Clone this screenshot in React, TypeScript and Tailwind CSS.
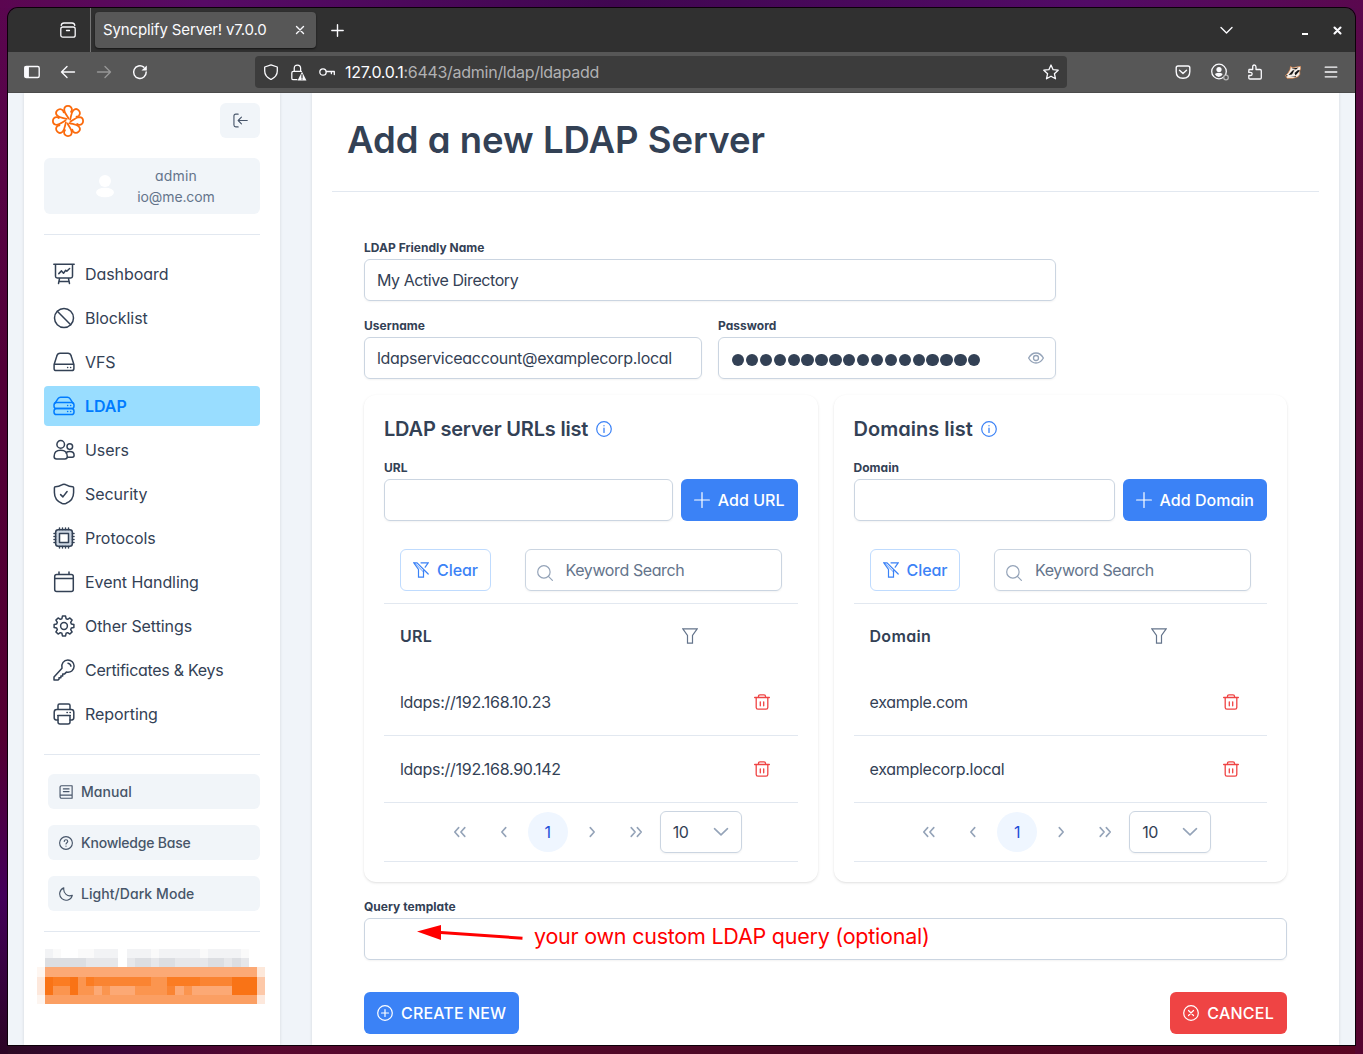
import type { ReactNode } from "react";

const PETALS = [0, 45, 90, 135, 180, 225, 270, 315];

// eight-tooth cog outline centred on 11,11
const GEAR_PATH =
  PETALS.map((deg, i) => {
    const point = (offset: number, radius: number) => {
      const a = ((deg + offset) * Math.PI) / 180;
      return `${(11 + radius * Math.cos(a)).toFixed(2)} ${(11 + radius * Math.sin(a)).toFixed(2)}`;
    };
    return `${i === 0 ? "M" : "L"}${point(-16, 7.6)} L${point(-9, 10)} L${point(9, 10)} L${point(16, 7.6)}`;
  }).join(" ") + "Z";

interface IconProps {
  className?: string;
  children: ReactNode;
  box?: number;
  width?: number;
}

function Icon({ className = "size-4", children, box = 16, width = 1.2 }: IconProps) {
  return (
    <svg
      className={`${className} shrink-0`}
      viewBox={`0 0 ${box} ${box}`}
      fill="none"
      stroke="currentColor"
      strokeWidth={width}
      strokeLinecap="round"
      strokeLinejoin="round"
    >
      {children}
    </svg>
  );
}

const menu = [
  {
    label: "Dashboard",
    icon: (
      <>
        <path d="M.8 1.3h20.4M2.5 1.6v11.6q0 1.7 1.7 1.7h13.6q1.7 0 1.7-1.7V1.6M6.6 15.2 5.5 20.5M15.4 15.2l1.1 5.3M5.8 18.4h10.4" />
        <path d="m5.8 10.6 2.7-2.7 2 2.3 2.2-2.9 1.1.9 2.8-2.7" />
      </>
    ),
  },
  {
    label: "Blocklist",
    icon: (
      <>
        <circle cx="11" cy="11" r="9.5" />
        <path d="m4.3 4.3 13.4 13.4" />
      </>
    ),
  },
  {
    label: "VFS",
    icon: (
      <>
        <path d="M1.1 13.4 4 4.6Q4.7 2.3 7 2.3h8q2.3 0 3 2.3l2.9 8.8v4q0 2.2-2.2 2.2H3.3q-2.2 0-2.2-2.2zM1.3 13.2h19.4" />
        <path d="M14.6 16.4h.1M17.6 16.4h.1" />
      </>
    ),
  },
  {
    label: "LDAP",
    active: true,
    icon: (
      <>
        <path d="M2 8.2 5.2 3.4Q6 2.2 7.5 2.2h7q1.5 0 2.3 1.2L20 8.2" />
        <rect x="1" y="7.6" width="20" height="6" rx="2.6" />
        <rect x="1" y="13.6" width="20" height="6" rx="2.6" />
        <path d="M14.6 10.6h.1M17.6 10.6h.1M14.6 16.6h.1M17.6 16.6h.1" />
      </>
    ),
  },
  {
    label: "Users",
    icon: (
      <>
        <circle cx="7.7" cy="5.4" r="3.8" />
        <circle cx="16.8" cy="7.6" r="2.8" />
        <path d="M1.1 17.5c0-4 2.7-6.2 6.6-6.2s6.6 2.2 6.6 6.2c0 1.7-.9 2.5-2.5 2.5H3.6c-1.6 0-2.5-.8-2.5-2.5M13 13.9c1-.9 2.3-1.3 3.8-1.3 2.7 0 4.3 1.5 4.3 3.7 0 1.2-.6 1.9-1.8 1.9h-4.9" />
      </>
    ),
  },
  {
    label: "Security",
    icon: (
      <>
        <path d="M11 1.2q1.3 0 2.2.7 3 1.9 6.4 1.9 1 0 1 1v4.7q0 8-7.8 11-1.8.6-3.6 0-7.8-3-7.8-11V4.8q0-1 1-1 3.4 0 6.4-1.9.9-.7 2.2-.7z" />
        <path d="m7.6 11.6 2.3 2.3 4.2-5.4" />
      </>
    ),
  },
  {
    label: "Protocols",
    icon: (
      <>
        <rect x="2.7" y="2.7" width="16.6" height="16.6" rx="2.5" fill="#cbd5e1" />
        <rect x="6.5" y="6.5" width="9" height="9" fill="#fff" />
        <path d="M6.5 1v1.5M9.5 1v1.5M12.5 1v1.5M15.5 1v1.5M6.5 19.5V21M9.5 19.5V21M12.5 19.5V21M15.5 19.5V21M1 6.5h1.5M1 9.5h1.5M1 12.5h1.5M1 15.5h1.5M19.5 6.5H21M19.5 9.5H21M19.5 12.5H21M19.5 15.5H21" />
      </>
    ),
  },
  {
    label: "Event Handling",
    icon: (
      <>
        <rect x="1.7" y="3.5" width="18.6" height="17" rx="2" />
        <path d="M1.7 7.5h18.6M6 1v2.3M16 1v2.3" />
      </>
    ),
  },
  {
    label: "Other Settings",
    icon: (
      <>
        <path d={GEAR_PATH} />
        <circle cx="11" cy="11" r="3.4" />
      </>
    ),
  },
  {
    label: "Certificates & Keys",
    tight: true,
    icon: (
      <>
        <path d="M9 9.2C7.8 4.7 11 .9 14.8.9c3.6 0 6.3 2.7 6.3 6.2 0 4.2-3.5 6.9-7.7 6l-2 2H9.7v1.9H7.9v1.8H6v1.4l-.9.8H1V18z" />
        <path d="M15 4.2q2.5.4 2.9 3" />
      </>
    ),
  },
  {
    label: "Reporting",
    icon: (
      <>
        <path d="M5 6.6V2.5Q5 1 6.5 1h9Q17 1 17 2.5v4.1M5 17H3.2q-2-.2-2-2.2V9.2q0-2.600 2.600-2.600h14.400q2.600 0 2.600 2.600v5.600q0 2-2 2.200H17" />
        <path d="M4.7 12.5h12.6M5 12.5V19q0 2 2 2h8q2 0 2-2v-6.5M14 9.6h.3M17 9.6h.3" />
      </>
    ),
  },
];

const sideButtons = [
  {
    label: "Manual",
    icon: <path d="M3 .8h12v14.4H3.2q-2 0-2-2V2.6Q1.200.8 3 .8zM1.400 11.500H15M5 4.500h6.500M5 7.500h6.500" />,
  },
  {
    label: "Knowledge Base",
    tight: true,
    icon: (
      <>
        <circle cx="8" cy="8" r="7.3" />
        <path d="M6 6.2C6 3.6 10 3.7 10 6.2 10 7.6 8 7.7 8 9.2M8 11.600v.1" />
      </>
    ),
  },
  {
    label: "Light/Dark Mode",
    icon: <path d="M5.500 1A7.300 7.300 0 1 0 15.200 9.500C10 11.500 4.500 7.500 5.500 1z" />,
  },
];

// censored licence banner, one string of shades per row
const mosaic = [
  [" ba  aabbb bbbabbbbbabbbba  ", "#fafafa", "#f2f3f5", "#eff0f2"],
  [" cccccbbbb bccbccbbbbccbcb  ", "#f0f1f3", "#e6e7ea", "#dcdee2"],
];
const orangeRows = [
  ["#fef6f1", ..."11111111111111111111111111", "#fde8da"],
  ["#fde8dc", ..."54452433333332244443333555", "#fdc8a8"],
  ["#fde8dc", ..."52252212111222231211111555", "#fdc8a8"],
  ["#fdf5f0", ..."00000000000000000000000000", "#fde8dc"],
];
const oranges = ["#fb9f63", "#fca975", "#fb954f", "#fa8432", "#fb7c22", "#f97316"];

function Mosaic() {
  return (
    <div className="-ml-[7px] mt-[17px] w-[228px]">
      {mosaic.map(([cells, a, b, c]) => (
        <div key={cells} className="flex h-[9px]">
          {Array.from({ length: 28 }, (_, i) => {
            const shade = cells[i] ?? " ";
            const color = shade === "a" ? a : shade === "b" ? b : shade === " " ? "#ffffff" : c;
            return <span key={i} className="h-full flex-1" style={{ backgroundColor: color }} />;
          })}
        </div>
      ))}
      {orangeRows.map((row, r) => (
        <div key={r} className={r === 0 ? "flex h-[10px]" : "flex h-[9px]"}>
          {row.map((cell, i) => (
            <span
              key={i}
              className="h-full flex-1"
              style={{ backgroundColor: cell.startsWith("#") ? cell : oranges[Number(cell)] }}
            />
          ))}
        </div>
      ))}
    </div>
  );
}

function TabStrip() {
  return (
    <div className="flex h-11 shrink-0 items-center bg-[#303030] text-[#fbfbfe]">
      <div className="flex h-full w-[83px] items-center justify-end border-r border-[#757575] pr-[14px]">
        <Icon width={1.3}>
          <rect x=".8" y="5" width="14.4" height="10.2" rx="2" />
          <path d="M1.2 3.4Q1.5 1 4 1h8q2.5 0 2.8 2.4M6.5 8.5h3" />
        </Icon>
      </div>
      <div className="ml-1 flex h-9 w-[221px] items-center justify-between rounded bg-[#575757] pl-2 pr-[11px] shadow-[0_1px_2px_rgba(0,0,0,0.6)]">
        <span className="whitespace-nowrap text-[15px] tracking-[-0.009em]">Syncplify Server! v7.0.0</span>
        <Icon className="size-[10px]" box={10} width={1.4}>
          <path d="m1.500 1.500 7 7M8.500 1.500l-7 7" />
        </Icon>
      </div>
      <Icon className="ml-[15px] size-[13px]" box={13} width={1.4}>
        <path d="M6.5.8v11.4M.8 6.5h11.4" />
      </Icon>
      <Icon className="ml-auto mr-[69px] size-[13px]" box={13} width={1.4}>
        <path d="m1 3.5 5.500 5.500L12 3.500" />
      </Icon>
      <span className="mr-[25px] mt-[8px] h-[2px] w-[6px] bg-white" />
      <Icon className="mr-[13px] size-[9px]" box={9} width={2.1}>
        <path d="m1.500 1.500 6 6M7.500 1.500l-6 6" />
      </Icon>
    </div>
  );
}

function Toolbar() {
  return (
    <div className="flex h-[41px] shrink-0 items-center border-b border-[#4b4b4b] bg-[#575757] text-[#fbfbfe]">
      <Icon className="ml-4 size-4" width={1.4}>
        <rect x=".8" y="2.500" width="14.400" height="11" rx="1.500" />
        <path d="M1.200 3v10h3V3z" fill="currentColor" />
      </Icon>
      <Icon className="ml-5 size-4" width={1.4}>
        <path d="M14.500 8H1.500M7 2.500 1.500 8 7 13.500" />
      </Icon>
      <Icon className="ml-5 size-4 text-[#979797]" width={1.4}>
        <path d="M1.500 8h13M9 2.500 14.500 8 9 13.500" />
      </Icon>
      <Icon className="ml-5 size-4" width={1.5}>
        <path d="M14.200 8A6.300 6.300 0 1 1 11.800 3.200" />
        <path d="M14.800 1.400v5H9.500z" fill="currentColor" stroke="none" />
      </Icon>
      <div className="ml-[107px] flex h-8 w-[812px] items-center rounded bg-[#3c3c3c] px-2">
        <Icon width={1.3}>
          <path d="M8 .9 14.300 3v4q0 5.500-6.300 8.500Q1.700 12.500 1.700 7V3z" />
        </Icon>
        <Icon className="ml-[11px] size-[17px]" width={1.2}>
          <path d="M6.500 14.800H3.200q-1.500 0-1.500-1.500V8.500Q1.700 7 3.200 7h7.500M4 7V4Q4 1 7 1t3 3v3" />
          <path d="m11.300 7.200 4.200 8.300H7.100z" fill="currentColor" stroke="none" />
          <path d="M11.300 10v2.600M11.300 14v.2" stroke="#3c3c3c" />
        </Icon>
        <Icon className="ml-3 size-4" width={1.3}>
          <circle cx="4" cy="8" r="3.200" />
          <path d="M7.300 7.500h8v3M12.400 7.700v2" />
        </Icon>
        <span className="ml-[10px] whitespace-nowrap text-base tracking-[-0.017em] text-[#b1b1b3]">
          <span className="text-[#fbfbfe]">127.0.0.1</span>:6443/admin/ldap/ldapadd
        </span>
        <Icon className="ml-auto size-4" width={1.3}>
          <path d="m8 1 2.100 4.700 5.100.5-3.800 3.500 1.100 5.100L8 12.200l-4.500 2.600 1.100-5.100L.8 6.200l5.100-.5z" />
        </Icon>
      </div>
      <Icon className="ml-auto size-4" width={1.4}>
        <path d="M3 2h10q1.800 0 1.800 1.800v3.700q0 6.800-6.800 6.800T1.200 7.500V3.800Q1.200 2 3 2zM4.500 6.200 8 9.500l3.500-3.300" />
      </Icon>
      <Icon className="ml-5 size-[18px]" box={18} width={1.3}>
        <circle cx="8" cy="8.500" r="7.300" />
        <circle cx="8" cy="6.500" r="2.600" fill="currentColor" stroke="none" />
        <path d="M3.800 11q4.200-2.400 8 0-1.600 3-4 3t-4-3z" fill="currentColor" stroke="none" />
        <circle cx="15" cy="14.500" r="2.300" fill="#575757" stroke="#b5b5b5" />
      </Icon>
      <Icon className="ml-[18px] size-4" width={1.3}>
        <path d="M2 5.500h3.700V3Q5.700 1 7.300 1T9 3v2.500h4q1.300 0 1.300 1.300v7q0 1.200-1.300 1.200H3q-1.200 0-1.200-1.200v-2.300h1.500q1.800 0 1.800-1.600T3.300 8.300H1.700z" />
      </Icon>
      <svg className="ml-[22px] size-4" viewBox="0 0 16 16">
        <path d="M.5 11.500 3 9l2-3.500.5-3 2.300 1.300 4.700-1 3-.5.2 2-1 3 .2 3-2 2.500-5 1.500H2z" fill="#f4eee8" stroke="#e67e35" strokeWidth=".6" />
        <path d="m3.500 11 4-4.500L9.500 6 7 10.500zM9.500 9 13 6l2 .5-4.500 5zM6.500 4.800l7-1.300-2.500 2zM.8 11l2 .5-1 1.200zM5 13l6-1v.8z" fill="#171717" />
      </svg>
      <Icon className="ml-[22px] mr-4 size-4" width={1.3}>
        <path d="M2.200 3.200h11.600M2.200 8h11.600M2.200 12.800h11.600" />
      </Icon>
    </div>
  );
}

function Sidebar() {
  return (
    <aside className="w-64 shrink-0 bg-white px-5 pt-[10px] shadow-[0_0_3px_rgba(0,0,0,0.12)]">
      <div className="flex h-[35px] items-center justify-between pl-2">
        <svg className="-ml-px size-[34px]" viewBox="0 0 34 34" fill="none" stroke="#fb6a0c" strokeWidth="1.8" strokeLinecap="round">
          {PETALS.map((deg) => (
            <path
              key={deg}
              d="M17.500 14.500C16 11.500 13.200 8.800 13.200 5.700 13.300 3.300 15 1.900 17 1.900c2.400 0 4 1.700 3.900 3.900-.1.900-.4 1.500-.9 2.100"
              transform={`rotate(${deg} 17 17)`}
            />
          ))}
        </svg>
        <button className="flex h-[35px] w-10 items-center justify-center rounded-md bg-[#f1f5f9] text-[#475569]">
          <Icon className="size-[15px]">
            <path d="M5.500 1.200H3Q1 1.200 1 3.200v9.600q0 2 2 2h2.500M15.200 8H5.500M9 4.500 5.500 8 9 11.500" />
          </Icon>
        </button>
      </div>

      <div className="mt-5 flex h-14 items-center rounded-md bg-[#f1f5f9] pl-[52px]">
        <svg className="h-[23px] w-[18px]" viewBox="0 0 18 23" fill="#fff">
          <circle cx="9" cy="6" r="6" />
          <ellipse cx="9" cy="17.500" rx="9" ry="4.800" />
        </svg>
        <div className="ml-[22px] w-[80px] text-center text-[14px] leading-[21px] text-[#64748b]">
          <p className="tracking-[0.012em]">admin</p>
          <p className="tracking-[-0.008em]">io@me.com</p>
        </div>
      </div>

      <nav className="mt-5 flex flex-col gap-1 border-y border-[#e2e8f0] pb-5 pt-[19px]">
        {menu.map((item) => (
          <a
            key={item.label}
            className={
              item.active
                ? "flex h-10 items-center gap-[10px] rounded bg-[#99ddff] pl-[9px] font-semibold text-[#007bff]"
                : "flex h-10 items-center gap-[10px] rounded pl-[9px]"
            }
          >
            <Icon className="size-[22px]" box={22} width={1.5}>
              {item.icon}
            </Icon>
            <span className={item.tight ? "tracking-[-0.018em]" : "tracking-[-0.004em]"}>{item.label}</span>
          </a>
        ))}
      </nav>

      <div className="mt-[19px] flex flex-col gap-4 border-b border-[#e2e8f0] pb-5 pl-1">
        {sideButtons.map((item) => (
          <button
            key={item.label}
            className="flex h-[35px] items-center gap-2 rounded-md bg-[#f1f5f9] pl-[11px] text-sm font-medium text-[#475569]"
          >
            <Icon className="size-[14px]" width={1.3}>{item.icon}</Icon>
            <span className={item.tight ? "tracking-[-0.015em]" : "tracking-[0.004em]"}>{item.label}</span>
          </button>
        ))}
      </div>
      <Mosaic />
    </aside>
  );
}

interface FieldProps {
  label: string;
  className?: string;
  children?: ReactNode;
}

function Field({ label, className = "", children }: FieldProps) {
  return (
    <div className={className}>
      <div className="h-5 text-xs font-bold leading-[17px] tracking-[0.002em]">{label}</div>
      <div className="flex h-[42px] items-center rounded-md border border-[#cbd5e1] px-3 shadow-[0_1px_2px_rgba(18,18,23,0.05)]">
        {children}
      </div>
    </div>
  );
}

function FilterIcon() {
  return (
    <Icon className="size-4 text-[#64748b]">
      <path d="M.8.8h14.400L10.500 7.500v7.700h-5V7.500z" strokeLinejoin="miter" />
    </Icon>
  );
}

function Paginator() {
  return (
    <div className="flex h-[59px] items-center justify-center gap-1 border-b border-[#e2e8f0] text-[#94a3b8]">
      <div className="flex size-10 items-center justify-center">
        <Icon width={1.8} className="size-[14px]"><path d="M6.500 3 2 8l4.500 5M13.500 3 9 8l4.500 5" /></Icon>
      </div>
      <div className="flex size-10 items-center justify-center">
        <Icon width={1.8} className="size-[14px]"><path d="M10 3 5.500 8l4.500 5" /></Icon>
      </div>
      <div className="flex size-10 items-center justify-center rounded-full bg-[#eff6ff] text-[#1d4ed8]">1</div>
      <div className="flex size-10 items-center justify-center">
        <Icon width={1.8} className="size-[14px]"><path d="m6 3 4.500 5L6 13" /></Icon>
      </div>
      <div className="flex size-10 items-center justify-center">
        <Icon width={1.8} className="size-[14px]"><path d="M2.500 3 7 8l-4.500 5M9.500 3 14 8l-4.500 5" /></Icon>
      </div>
      <div className="flex h-[42px] w-[82px] items-center justify-between rounded-md border border-[#cbd5e1] px-3 text-[#334155] shadow-[0_1px_2px_rgba(18,18,23,0.05)]">
        <span className="tracking-[-0.03em]">10</span>
        <Icon className="size-4 text-[#94a3b8]" width={1.6}><path d="m1.500 4.700 6.500 6.200 6.500-6.200" /></Icon>
      </div>
    </div>
  );
}

interface ListCardProps {
  title: string;
  titleClass: string;
  column: string;
  rows: string[];
}

function ListCard({ title, titleClass, column, rows }: ListCardProps) {
  return (
    <section className="h-[487px] flex-1 rounded-xl bg-white p-5 shadow-[0_1px_3px_rgba(0,0,0,0.1),0_1px_2px_-1px_rgba(0,0,0,0.1)]">
      <h2 className="flex h-7 items-center gap-2 text-xl font-semibold">
        <span className={titleClass}>{title}</span>
        <Icon className="size-4 text-[#3b82f6]">
          <circle cx="8" cy="8" r="7.300" />
          <path d="M8 7.200v4.200M8 4.600v.2" strokeWidth="1.300" />
        </Icon>
      </h2>
      <div className="mt-4 flex items-end gap-2">
        <Field label={column} className="flex-1" />
        <button className="flex h-[42px] items-center gap-2 whitespace-nowrap rounded-md bg-[#3b82f6] px-[13px] font-medium tracking-[0.001em] text-white">
          <Icon><path d="M8 .6v14.800M.6 8h14.800" /></Icon>
          Add {column}
        </button>
      </div>

      <div className="mt-7 flex h-[55px] justify-between border-b border-[#e2e8f0] px-4">
        <button className="flex h-[42px] items-center gap-2 rounded-md border border-[#bfdbfe] px-3 font-medium tracking-[-0.004em] text-[#3b82f6]">
          <Icon>
            <path d="M10.500 8.500v6.700h-5V7.500L.8.8H4L15.200 12M8 .8h7.200l-3 4.400" strokeLinejoin="miter" />
            <path d="M1.500.8 10.500 10" strokeWidth=".8" />
          </Icon>
          Clear
        </button>
        <div className="flex h-[42px] w-[257px] items-center rounded-md border border-[#cbd5e1] pl-[11px] tracking-[-0.025em] text-[#64748b] shadow-[0_1px_2px_rgba(18,18,23,0.05)]">
          <Icon className="mr-[13px] mt-[5px] size-4 text-[#94a3b8]">
            <circle cx="6.900" cy="6.900" r="6.200" />
            <path d="m11.400 11.400 4 4" />
          </Icon>
          Keyword Search
        </div>
      </div>

      <div className="flex h-[65px] items-center justify-between pb-px pl-4 pr-[100px] font-semibold tracking-[0.02em]">
        {column}
        <FilterIcon />
      </div>
      {rows.map((row) => (
        <div key={row} className="flex h-[67px] items-center justify-between border-b border-[#e2e8f0] pl-4 pr-[28px] tracking-[-0.018em]">
          {row}
          <Icon className="size-4 text-[#ef4444]" width={1.3}>
            <path d="M.6 3.500h14.800M2.200 3.500v10q0 1.700 1.700 1.700h8.200q1.700 0 1.700-1.700v-10M4.500 3.200V2.300Q4.500.8 6 .8h4q1.500 0 1.500 1.500v.9M6.300 7.800v4M9.700 7.800v4" />
          </Icon>
        </div>
      ))}
      <Paginator />
    </section>
  );
}

function LdapForm() {
  return (
    <main className="w-[1027px] shrink-0 bg-white px-5 shadow-[0_0_3px_rgba(0,0,0,0.12)]">
      <h1 className="flex h-[99px] items-center border-b border-[#e2e8f0] pb-[3px] pl-[15px] text-[36.5px] font-semibold">
        Add a new LDAP Server
      </h1>
      <div className="px-8 pt-[47px]">
        <Field label="LDAP Friendly Name" className="w-[692px]">
          <span className="tracking-[-0.027em]">My Active Directory</span>
        </Field>
        <div className="mt-4 flex w-[692px] gap-4">
          <Field label="Username" className="flex-1">
            <span className="tracking-[-0.019em]">ldapserviceaccount@examplecorp.local</span>
          </Field>
          <Field label="Password" className="flex-1">
            <div className="mt-1 flex gap-[1.6px] pl-px">
              {Array.from({ length: 18 }, (_, i) => (
                <span key={i} className="size-[12.3px] rounded-full bg-[#334155]" />
              ))}
            </div>
            <Icon className="-mr-px ml-auto size-4 text-[#94a3b8]" width={1.3}>
              <path d="M.6 8Q3.500 3 8 3t7.400 5Q12.500 13 8 13T.6 8z" />
              <circle cx="8" cy="8" r="2.500" />
            </Icon>
          </Field>
        </div>

        <div className="mt-4 flex gap-4">
          <ListCard
            title="LDAP server URLs list"
            titleClass="tracking-[-0.01em]"
            column="URL"
            rows={["ldaps://192.168.10.23", "ldaps://192.168.90.142"]}
          />
          <ListCard
            title="Domains list"
            titleClass="tracking-[0.001em]"
            column="Domain"
            rows={["example.com", "examplecorp.local"]}
          />
        </div>

        <div className="relative mt-4">
          <Field label="Query template" />
          {/* red callout drawn over the query input */}
          <div className="absolute left-[53px] top-5 flex items-start text-[#ff0000]">
            <svg className="mt-[5px] h-[20px] w-[107px]" viewBox="0 0 107 20">
              <path d="M20 9.300 105.500 15.200" stroke="#ff0000" strokeWidth="3" />
              <path d="M0 8.500 24 2v15z" fill="#ff0000" />
            </svg>
            <span className="ml-[10px] mt-[2px] whitespace-nowrap text-[21.5px] leading-8 tracking-[-0.011em] [font-feature-settings:normal]">
              your own custom LDAP query (optional)
            </span>
          </div>
        </div>

        <div className="mt-8 flex justify-between">
          <button className="flex h-[42px] items-center gap-2 rounded-md bg-[#3b82f6] px-[13px] font-medium tracking-[0.009em] text-white">
            <Icon>
              <circle cx="8" cy="8" r="7.300" />
              <path d="M8 4.500v7M4.500 8h7" />
            </Icon>
            CREATE NEW
          </button>
          <button className="flex h-[42px] items-center gap-2 rounded-md bg-[#ef4444] px-[13px] font-medium tracking-[0.015em] text-white">
            <Icon>
              <circle cx="8" cy="8" r="7.300" />
              <path d="m5.500 5.500 5 5M10.500 5.500l-5 5" />
            </Icon>
            CANCEL
          </button>
        </div>
      </div>
    </main>
  );
}

export default function App() {
  return (
    <div className="h-[1054px] w-[1363px] overflow-hidden bg-[#540a50] bg-[linear-gradient(90deg,#5b0650,#570a65_15%,#400650_45%,#520a66_80%,#5a084e),linear-gradient(180deg,#5a0650,#520038_35%,#530032_70%,#43005a_85%,#2b0524),linear-gradient(180deg,#5a084e,#5b0a34_20%,#560530),linear-gradient(90deg,#2b0a22,#3c0538_9%,#58082f_20%,#4b0824_60%,#5a0522)] bg-[length:100%_8px,8px_100%,8px_100%,100%_9px] bg-[position:top,left,right,bottom] bg-no-repeat p-2 pb-[9px] font-['Inter',sans-serif] text-base">
      <div className="flex h-full flex-col overflow-hidden rounded-t-[10px] shadow-[0_0_0_1px_#0c0009]">
        <TabStrip />
        <Toolbar />
        <div className="flex min-h-0 flex-1 gap-8 overflow-hidden bg-[#f0f4f9] px-4 text-[#334155] [font-feature-settings:'cv11']">
          <Sidebar />
          <LdapForm />
        </div>
      </div>
    </div>
  );
}
